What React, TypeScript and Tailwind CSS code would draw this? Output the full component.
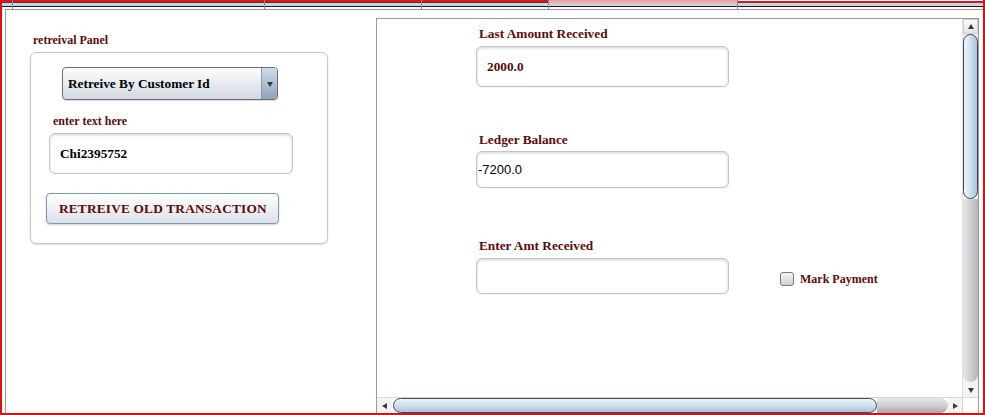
import React from "react";

const serif = { fontFamily: '"Liberation Serif", "Times New Roman", serif' };
const lbl = "font-bold text-[#5e0b0b] whitespace-nowrap";

function Tri({ dir }: { dir: "up" | "down" | "left" | "right" }) {
  const pts =
    dir === "up" ? "4,1 7,6 1,6" : dir === "down" ? "1,2 7,2 4,7" : dir === "left" ? "6,1 6,7 1,4" : "2,1 2,7 7,4";
  return (
    <svg width="8" height="8" viewBox="0 0 8 8">
      <polygon points={pts} fill="#3a3a3a" />
    </svg>
  );
}

function TextBox({ h, children }: { h: string; children?: React.ReactNode }) {
  return (
    <div
      className={`${h} w-[253px] rounded-[6px] border border-[#c4c4c4] bg-white flex items-center shadow-[inset_0_1px_3px_rgba(0,0,0,0.18),0_1px_1px_rgba(0,0,0,0.05)]`}
    >
      {children}
    </div>
  );
}

export default function App() {
  return (
    <div
      className="w-[985px] h-[415px] bg-white border-l-2 border-r-2 border-b-2 border-[#e01010] flex flex-col overflow-hidden"
      style={serif}
    >
      {/* tab strip */}
      <div className="flex h-[9px] shrink-0">
        {[11, 252, 157, 127].map((w, i) => (
          <div key={i} className="flex flex-col border-r border-[#8a8a8a]" style={{ width: w }}>
            <div className="h-[2px] bg-[#d81818]" />
            <div className="h-[1px] bg-[#6a2a2a]" />
            <div className="h-[3px] bg-[#c6d5ea]" />
            <div className="h-[1px] bg-[#1c1c1c]" />
          </div>
        ))}
        <div className="flex flex-col w-[188px]">
          <div className="h-[6px] bg-gradient-to-b from-[#ee9a9a] to-[#cbd8ea]" />
          <div className="h-[1px] bg-[#1c1c1c]" />
        </div>
        <div className="flex flex-col flex-1 border-l border-[#8a8a8a]">
          <div className="h-[1px] bg-white" />
          <div className="h-[2px] bg-[#d81818]" />
          <div className="h-[3px] bg-[#c6d5ea]" />
          <div className="h-[1px] bg-[#1c1c1c]" />
        </div>
      </div>

      {/* body */}
      <div className="ml-[3px] flex-1 flex border-t border-l border-[#9a9a9a] min-h-0">
        {/* left column */}
        <div className="w-[370px] shrink-0 pl-[24px] pt-[23px]">
          <div className={`${lbl} text-[12px] leading-[14px] pl-[3px]`}>retreival Panel</div>
          <div className="mt-[5px] w-[298px] h-[192px] rounded-[6px] border border-[#c8c8c8] bg-white shadow-[0_1px_2px_rgba(0,0,0,0.12)] flex flex-col">
            <div className="mt-[14px] ml-[31px] w-[216px] h-[33px] rounded-[4px] border border-[#6e6e6e] bg-gradient-to-b from-[#fdfdfe] to-[#d3d9e2] flex overflow-hidden shadow-[0_1px_1px_rgba(0,0,0,0.15)]">
              <div className="flex-1 flex items-center pl-[5px] text-[13.3px] font-bold text-black whitespace-nowrap">Retreive By Customer Id</div>
              <div className="w-[16px] border-l border-[#8d9bab] bg-gradient-to-b from-[#cfdceb] to-[#8ea4bc] flex items-center justify-center">
                <Tri dir="down" />
              </div>
            </div>
            <div className={`${lbl} text-[12px] leading-[14px] mt-[14px] ml-[22px]`}>enter text here</div>
            <div className="mt-[5px] ml-[18px] w-[244px] h-[41px] rounded-[6px] border border-[#c4c4c4] bg-white flex items-center pl-[10px] shadow-[inset_0_1px_3px_rgba(0,0,0,0.18)]">
              <span className="text-[13.3px] font-bold text-black">Chi2395752</span>
            </div>
            <button className="mt-[19px] ml-[15px] w-[233px] h-[31px] rounded-[4px] border-[1.5px] border-[#7f98b4] bg-gradient-to-b from-[#ffffff] to-[#dce1e9] flex items-center pl-[12px] shadow-[0_1px_2px_rgba(0,0,0,0.2)]">
              <span className="text-[13.3px] tracking-[0.2px] font-bold text-[#5e0b0b] whitespace-nowrap">RETREIVE OLD TRANSACTION</span>
            </button>
          </div>
        </div>

        {/* right panel */}
        <div className="mt-[8px] w-[603px] shrink-0 border-t border-l border-r border-[#999] flex flex-col">
          <div className="flex h-[378px]">
            <div className="w-[585px] pl-[99px] pt-[7px] flex flex-col">
              <div className={`${lbl} text-[13.3px] leading-[16px] pl-[3px]`}>Last Amount Received</div>
              <div className="mt-[4px]">
                <TextBox h="h-[41px]">
                  <span className="pl-[10px] text-[13.3px] font-bold text-[#5e0b0b]">2000.0</span>
                </TextBox>
              </div>
              <div className={`${lbl} text-[13.3px] leading-[16px] pl-[3px] mt-[45px]`}>Ledger Balance</div>
              <div className="mt-[3px]">
                <TextBox h="h-[37px]">
                  <span className="pl-[1px] text-[13px] text-black" style={{ fontFamily: '"Liberation Sans", Arial, sans-serif' }}>
                    -7200.0
                  </span>
                </TextBox>
              </div>
              <div className={`${lbl} text-[13.3px] leading-[16px] pl-[3px] mt-[50px]`}>Enter Amt Received</div>
              <div className="mt-[4px] flex items-center">
                <TextBox h="h-[36px]" />
                <div className="ml-[51px] mt-[6px] flex items-center">
                  <div className="w-[14px] h-[14px] rounded-[3px] border border-[#7a7a7a] bg-gradient-to-b from-[#f4f4f6] to-[#cdd2da]" />
                  <span className={`${lbl} text-[12px] ml-[6px]`}>Mark Payment</span>
                </div>
              </div>
            </div>
            {/* vertical scrollbar */}
            <div className="w-[16px] flex flex-col bg-[#f0f0f0] border-l border-[#e0e0e0]">
              <div className="h-[15px] flex items-center justify-center bg-gradient-to-b from-[#fafafa] to-[#e4e4e4] border border-[#d0d0d0]">
                <Tri dir="up" />
              </div>
              <div className="h-[165px] rounded-t-[10px] rounded-b-[10px] border border-[#3a4a5a] bg-gradient-to-r from-[#eef5fb] via-[#cfe0ef] to-[#a9c3dc]" />
              <div className="flex-1 bg-gradient-to-r from-[#e6e6e8] via-[#d0d0d4] to-[#b4b4b8] rounded-b-[8px]" />
              <div className="h-[15px] flex items-center justify-center bg-[#f4f4f4]">
                <Tri dir="down" />
              </div>
            </div>
          </div>
          {/* horizontal scrollbar */}
          <div className="h-[16px] flex border-t border-[#d8d8d8]">
            <div className="w-[15px] flex items-center justify-center bg-[#f4f4f4]">
              <Tri dir="left" />
            </div>
            <div className="ml-[1px] w-[484px] rounded-l-[10px] rounded-r-[10px] border border-[#3a4a5a] bg-gradient-to-b from-[#eef5fb] via-[#cfe0ef] to-[#a9c3dc]" />
            <div className="flex-1 bg-gradient-to-b from-[#e6e6e8] via-[#d0d0d4] to-[#a8a8ac] rounded-r-[8px]" />
            <div className="w-[14px] flex items-center justify-center bg-[#f4f4f4]">
              <Tri dir="right" />
            </div>
            <div className="w-[16px] bg-white border-l border-[#d8d8d8]" />
          </div>
        </div>
        <div className="flex-1" />
      </div>
    </div>
  );
}
